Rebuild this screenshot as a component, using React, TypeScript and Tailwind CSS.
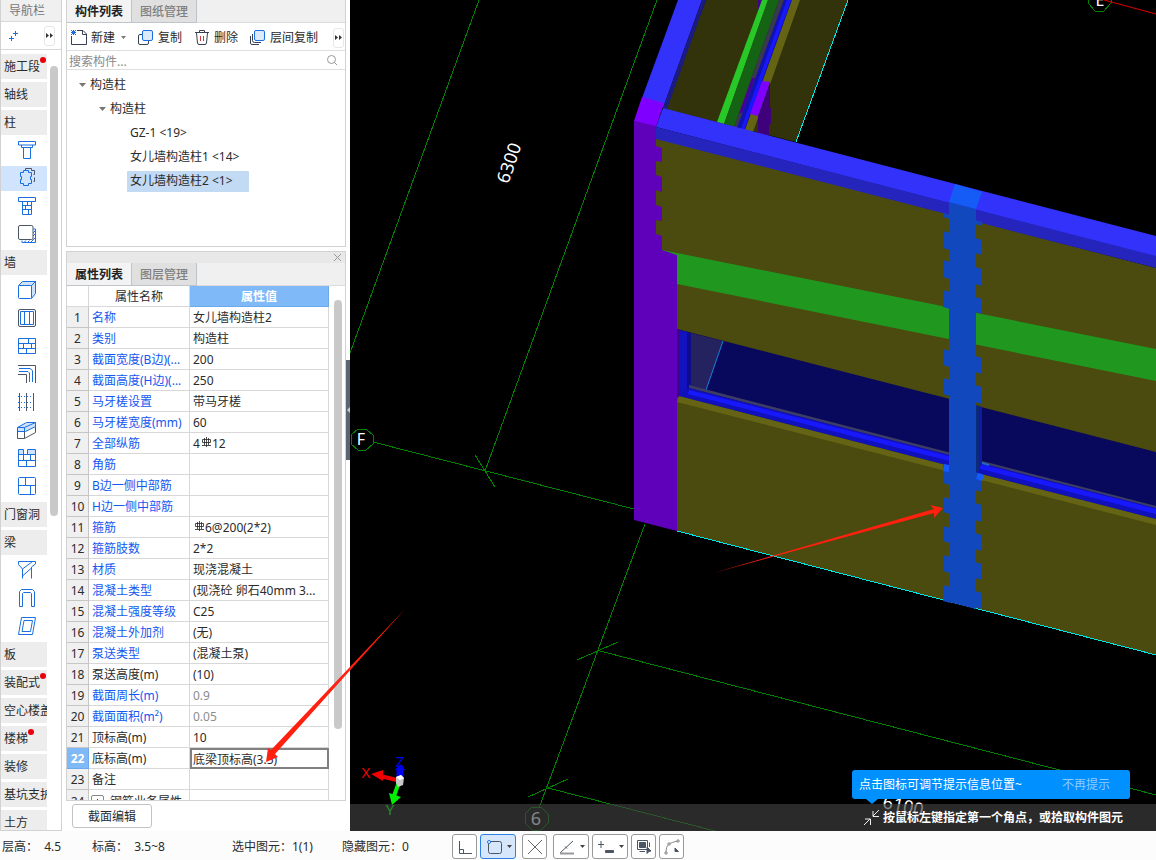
import React from "react";

/* ================= DATA ================= */

type NavItem = { label?: string; icon?: string; dot?: boolean; active?: boolean };

const navItems: NavItem[] = [
  { label: "施工段", dot: true },
  { label: "轴线" },
  { label: "柱" },
  { icon: "column" },
  { icon: "structColumn", active: true },
  { icon: "brickColumn" },
  { icon: "insulation" },
  { label: "墙" },
  { icon: "wall" },
  { icon: "curtain" },
  { icon: "brick" },
  { icon: "layers" },
  { icon: "dotted" },
  { icon: "parapet" },
  { icon: "brickNotch" },
  { icon: "brickPlain" },
  { label: "门窗洞" },
  { label: "梁" },
  { icon: "beam" },
  { icon: "lintel" },
  { icon: "ring" },
  { label: "板" },
  { label: "装配式", dot: true },
  { label: "空心楼盖" },
  { label: "楼梯", dot: true },
  { label: "装修" },
  { label: "基坑支护" },
  { label: "土方" },
];

type Prop = { name: string; value: string; plain?: boolean; muted?: boolean };

const props: Prop[] = [
  { name: "名称", value: "女儿墙构造柱2" },
  { name: "类别", value: "构造柱" },
  { name: "截面宽度(B边)(...", value: "200" },
  { name: "截面高度(H边)(...", value: "250" },
  { name: "马牙槎设置", value: "带马牙槎" },
  { name: "马牙槎宽度(mm)", value: "60" },
  { name: "全部纵筋", value: "4#12" },
  { name: "角筋", value: "" },
  { name: "B边一侧中部筋", value: "" },
  { name: "H边一侧中部筋", value: "" },
  { name: "箍筋", value: "#6@200(2*2)" },
  { name: "箍筋肢数", value: "2*2" },
  { name: "材质", value: "现浇混凝土" },
  { name: "混凝土类型", value: "(现浇砼 卵石40mm 3..." },
  { name: "混凝土强度等级", value: "C25" },
  { name: "混凝土外加剂", value: "(无)" },
  { name: "泵送类型", value: "(混凝土泵)" },
  { name: "泵送高度(m)", value: "(10)", plain: true },
  { name: "截面周长(m)", value: "0.9", muted: true },
  { name: "截面面积(m²)", value: "0.05", muted: true },
  { name: "顶标高(m)", value: "10", plain: true },
  { name: "底标高(m)", value: "底梁顶标高(3.5)", plain: true },
  { name: "备注", value: "", plain: true },
];

/* ================= ICONS ================= */

const B = "#1a6fe0";
const D = "#4b5563";

const navIcons: Record<string, React.ReactNode> = {
  column: <path d="M.5 .5h17v3.500h-17zM3.500 4v2.500h11V4M5.500 6.500v11h7v-11" />,
  structColumn: (
    <>
      <path d="M7.500 1.500V-.5h6v2h3v4h-1M16.500 8.500v4h-1" stroke={D} />
      <path d="M5.500 1.500h5v2h3v4h-1v3h1v4h-3v2h-5v-2h-3v-4h1v-3h-1v-4h3z" />
    </>
  ),
  brickColumn: <path d="M.5 .5h17v4h-17zM4.500 4.500v13h9v-13M4.500 8.500h9M4.500 12.500h9M9.500 4.500v4M7.500 8.500v4M10.500 12.500v5" />,
  insulation: (
    <>
      <path d="M15.500 4h2v13.500H4v-2M15 8l2.500-2.500M15 11l2.500-2.500M13 17l4-4M10 17l1.500-1.500M6.500 17l1.500-1.500" />
      <rect x=".5" y=".5" width="14.500" height="14" rx="1.500" stroke={D} fill="#fff" />
    </>
  ),
  wall: (
    <>
      <path d="M.5 4.500l4-4h13l-4 4zM13.500 4.500l4-4v12l-4 5z" fill="#cfe2fb" />
      <rect x=".5" y="4.500" width="13" height="13" rx="1" fill="#fff" />
    </>
  ),
  curtain: (
    <>
      <rect x=".5" y=".5" width="17" height="17" rx="1.500" stroke={D} />
      <path d="M2.500 2.500h13v13h-13zM6.500 2.500v13M11.500 2.500v13" />
    </>
  ),
  brick: <path d="M.5 1.500h17v15h-17zM.5 6.500h17M.5 11.500h17M10.500 1.500v5M5.500 6.500v5M13.500 6.500v5M8.500 11.500v5" />,
  layers: (
    <>
      <path d="M0 .5h17.500V18M0 9.500h8.500V18" stroke={D} />
      <path d="M1 3.500h11l2.500 2V17M1 6.500h9l1.500 1.500V17" />
    </>
  ),
  dotted: (
    <>
      <path d="M1.500 0v18M8.500 0v18M15.500 0v18" stroke={D} />
      <path d="M0 3.500h18M0 9.500h18M0 14.500h18" strokeDasharray="1 2" />
    </>
  ),
  parapet: (
    <>
      <path d="M-.5 6.500l9-5h9v4l-10 5h-8z" fill="#cfe2fb" />
      <path d="M-.5 6.500h7v4M6.500 6.500l11-5" />
      <path d="M-.5 9v8.500h7v-7M6.500 17.500l11-6v-6" stroke={D} />
    </>
  ),
  brickNotch: (
    <>
      <path d="M.5 .5h5v5h-5zM9.500 .5h8v5h-8z" fill="#cfe2fb" />
      <path d="M.5 5.500v12h17v-12M.5 5.500h17M.5 11.500h17M5.500 5.500v6M12.500 5.500v6M8.500 11.500v6" />
    </>
  ),
  brickPlain: (
    <>
      <rect x=".5" y=".5" width="17" height="17" rx="1" />
      <path d="M.5 8.500h17M7.500 .5v8M12.500 8.500v9" />
    </>
  ),
  beam: <path d="M.5 .5h17v2.500l-4 3v11.500M.5 .5v3l4 4.500v9.500M4.500 8l10-7.500M4.500 15l9-8" />,
  lintel: <path d="M1.500 17.500V2.500l2-2h11l2 2v15h-3V4.500l-1-1h-7l-1 1v13z" />,
  ring: <path d="M3.500 .5h14l-3 17H.5zM6 3.500h8.500l-2 11H4z" />,
};

const Svg = ({ w, h, children, stroke = "#374151" }: { w: number; h: number; children: React.ReactNode; stroke?: string }) => (
  <svg width={w} height={h} viewBox={`0 0 ${w} ${h}`} fill="none" stroke={stroke} className="block shrink-0 overflow-visible" aria-hidden="true">
    {children}
  </svg>
);

const MoreButton = () => (
  <button aria-label="更多" className="flex h-5 w-[11px] shrink-0 items-center justify-center rounded-[3px] border border-gray-200 bg-white">
    <Svg w={7} h={5} stroke="none">
      <path d="M0 0l3 2.500L0 5zM4 0l3 2.500L4 5z" fill="#333" />
    </Svg>
  </button>
);

/* Rebar grade mark used in front of diameters */
const Rebar = () => (
  <svg width="10" height="10" viewBox="0 0 10 10" fill="none" stroke="#222" className="mx-px mb-1.5 inline-block" role="img" aria-label="HRB400">
    <path d="M5.500 0v10M1 8.500h9M1.500 5.500v-3h8v3zM3.500 1v7M7.500 1v7" strokeWidth=".8" />
  </svg>
);

/* ================= LEFT NAVIGATION ================= */

const NavBar = () => (
  <nav className="flex w-[62px] shrink-0 flex-col overflow-hidden border-x border-b border-[#d2d2d2] bg-white">
    <div className="flex h-[22px] shrink-0 items-center border-b border-[#d8d8d8] bg-[#f0f0f0] pl-2 text-[#777]">导航栏</div>
    <div className="flex h-7 shrink-0 items-center justify-between border-b border-[#d8d8d8] pr-1.5 pl-2">
      <Svg w={9} h={10} stroke={B}>
        <path d="M6.500 0v5M4 2.500h5M2.500 5v5M0 7.500h5" />
      </Svg>
      <MoreButton />
    </div>
    <div className="flex min-h-0 flex-1 gap-[3px] pt-1">
      <ul className="flex w-[46px] flex-col gap-[3px] overflow-hidden">
        {navItems.map((item, i) => (
          <li key={i} className="h-[25px] shrink-0">
            {item.label ? (
              <button className="flex h-full w-full items-center overflow-hidden bg-[#ededed] pl-[3px] whitespace-nowrap">
                <span className="relative">
                  {item.label}
                  {item.dot && <i className="absolute -top-0.5 left-full size-1.5 rounded-full bg-red-600" />}
                </span>
              </button>
            ) : (
              <button
                aria-label={item.icon}
                className={`flex h-full w-full items-center pl-[17px] ${item.active ? "bg-[#d0e5fd]" : ""}`}
              >
                <Svg w={19} h={19} stroke={B}>
                  {navIcons[item.icon as string]}
                </Svg>
              </button>
            )}
          </li>
        ))}
      </ul>
      <div className="mt-3 h-[450px] w-2 shrink-0 rounded-full bg-[#c9c9c9]" />
    </div>
  </nav>
);

/* ================= COMPONENT LIST ================= */

const Tabs = ({ items }: { items: string[] }) => (
  <div role="tablist" className="flex h-[23px] shrink-0 border-b border-[#dcdcdc] bg-[#f0f0f0]">
    {items.map((t, i) => (
      <button
        key={t}
        role="tab"
        aria-selected={i === 0}
        className={`h-[23px] border-r border-b border-[#bfc3ca] px-2 pt-0.5 ${i === 0 ? "bg-[#f3f3f3] font-bold text-[#222]" : "bg-[#e0e0e0] font-medium text-[#808080]"}`}
      >
        {t}
      </button>
    ))}
  </div>
);

const CopyIcon = ({ triple = false }: { triple?: boolean }) => (
  <Svg w={16} h={15}>
    {triple && <path d="M.5 6v7a1.500 1.500 0 0 0 1.500 1.500h7" />}
    <path d={triple ? "M2.500 4v6.500a2 2 0 0 0 2 2H11" : "M4 4.500H2a1.500 1.500 0 0 0-1.500 1.500v7A1.500 1.500 0 0 0 2 14.500h7a1.500 1.500 0 0 0 1.500-1.500v-2"} />
    <rect x="4.500" y=".5" width="10" height="10" rx="1.500" fill="#dceafc" stroke={B} />
  </Svg>
);

const Caret = () => (
  <Svg w={7} h={4} stroke="none">
    <path d="M0 0h7L3.500 4z" fill="#777" />
  </Svg>
);

const ComponentList = () => (
  <section className="flex h-[247px] shrink-0 flex-col border-x border-b border-[#d2d2d2] bg-white">
    <Tabs items={["构件列表", "图纸管理"]} />
    <div className="flex h-[28px] shrink-0 items-center border-b border-[#dedede] pt-0.5 pr-px pl-1">
      <button className="flex items-center gap-1">
        <Svg w={16} h={15}>
          <path d="M6 .5h6l3.500 3.500v10.500H.5V6M11.500 .5v4h4" />
          <path d="M0 0l5 5M5 0L0 5M2.500 0v5M0 2.500h5" stroke={B} />
        </Svg>
        新建
      </button>
      <button aria-label="新建选项" className="ml-1.5">
        <Svg w={5} h={3} stroke="none">
          <path d="M0 0h5L2.500 3z" fill="#777" />
        </Svg>
      </button>
      <button className="ml-3 flex items-center gap-1">
        <CopyIcon />
        复制
      </button>
      <button className="ml-3 flex items-center gap-1">
        <Svg w={16} h={15}>
          <path d="M1 2.500h14M5.500 2.500v-2h5v2M2.500 3l1 10q.2 1.500 1.500 1.500h6q1.300 0 1.500-1.500l1-10" />
          <path d="M6.500 6v5M9.500 6v5" stroke="#e23333" />
        </Svg>
        删除
      </button>
      <button className="ml-3 flex items-center gap-1">
        <CopyIcon triple />
        层间复制
      </button>
      <div className="ml-auto">
        <MoreButton />
      </div>
    </div>
    <label className="flex h-[19px] shrink-0 items-center border-b border-[#dedede] pr-2 pl-0.5">
      <input
        type="text"
        aria-label="搜索构件"
        placeholder="搜索构件..."
        className="h-full min-w-0 flex-1 pt-0.5 outline-none placeholder:text-[#8a8a8a]"
      />
      <Svg w={10} h={10} stroke="#999">
        <circle cx="4.500" cy="4.500" r="4" />
        <path d="M7.500 7.500L10 10" />
      </Svg>
    </label>
    <ul className="pt-[3px] leading-6">
      <li className="flex items-center gap-1 pl-3">
        <Caret />
        构造柱
      </li>
      <li className="flex items-center gap-1 pl-8">
        <Caret />
        构造柱
      </li>
      <li className="pl-[63px]">GZ-1 &lt;19&gt;</li>
      <li className="pl-[63px]">女儿墙构造柱1 &lt;14&gt;</li>
      <li className="flex h-6 items-center pl-[60px]">
        <span className="h-[21px] w-[122px] rounded-[1px] bg-[#c2daf4] pl-[3px] leading-5">女儿墙构造柱2 &lt;1&gt;</span>
      </li>
    </ul>
  </section>
);

/* ================= PROPERTY TABLE ================= */

const PropertyPanel = () => (
  <section className="flex min-h-0 flex-1 flex-col border border-[#d2d2d2] bg-white">
    <div className="flex h-[11px] shrink-0 items-center justify-end bg-[#e8e8e8] pr-1">
      <button aria-label="关闭">
        <Svg w={7} h={7} stroke="#999">
          <path d="M0 0l7 7M7 0L0 7" />
        </Svg>
      </button>
    </div>
    <Tabs items={["属性列表", "图层管理"]} />
    <div className="flex min-h-0 flex-1 overflow-hidden">
      <div className="min-w-0 flex-1">
        <table className="w-full table-fixed border-separate border-spacing-0">
          <colgroup>
            <col className="w-[22px]" />
            <col className="w-[101px]" />
            <col />
          </colgroup>
          <thead>
            <tr className="h-[21px] leading-[18px]">
              <th className="border-r border-b border-[#d8d8d8] p-0" />
              <th className="border-r border-b border-[#d8d8d8] p-0 pt-0.5 font-normal">属性名称</th>
              <th className="border-r border-b border-[#6aa9ec] bg-[#80b9f8] p-0 pt-0.5 font-bold text-white">属性值</th>
            </tr>
          </thead>
          <tbody>
            {props.map((p, i) => {
              const selected = i === 21;
              return (
                <tr key={p.name} className="h-[21px] leading-[18px] whitespace-nowrap">
                  <td className={`border-r border-b p-0 pt-0.5 text-center ${selected ? "border-[#6aa9ec] bg-[#80b9f8] font-bold text-white" : "border-[#c6c6c6] bg-[#f0f0f0]"}`}>
                    {i + 1}
                  </td>
                  <td className={`border-r border-b border-[#d8d8d8] p-0 pt-0.5 pl-[3px] ${p.plain ? "" : "text-[#1458f0]"}`}>{p.name}</td>
                  {selected ? (
                    <td className="p-0">
                      <input
                        type="text"
                        aria-label={p.name}
                        defaultValue={p.value}
                        className="block h-[21px] w-full border-2 border-[#808080] pl-px outline-none"
                      />
                    </td>
                  ) : (
                    <td className={`border-r border-b border-[#d8d8d8] p-0 pt-0.5 pl-[3px] ${p.muted ? "text-[#8c8c8c]" : ""}`}>
                      {p.value.split("#").map((part, k) => (
                        <React.Fragment key={k}>
                          {k > 0 && <Rebar />}
                          {part}
                        </React.Fragment>
                      ))}
                    </td>
                  )}
                </tr>
              );
            })}
            <tr className="h-[21px] leading-[18px]">
              <td className="border-r border-[#c6c6c6] bg-[#f0f0f0] p-0 pt-0.5 text-center">24</td>
              <td className="border-r border-[#d8d8d8] p-0 pt-0.5">
                <button className="flex items-center gap-1.5 pl-0.5 whitespace-nowrap">
                  <Svg w={13} h={13}>
                    <rect x=".5" y=".5" width="12" height="12" rx="1.500" stroke="#888" />
                    <path d="M6.500 4v5M4 6.500h5" />
                  </Svg>
                  钢筋业务属性
                </button>
              </td>
              <td className="border-r border-[#d8d8d8] p-0" />
            </tr>
          </tbody>
        </table>
      </div>
      <div className="flex w-4 shrink-0 justify-end pt-3.5 pr-[3px]">
        <div className="h-[429px] w-2 rounded-full bg-[#c9c9c9]" />
      </div>
    </div>
  </section>
);

/* ================= 3D VIEW ================= */

// [top, bottom] of every tooth along the two sides of the column
const leftTeeth = [[213, 217], [231, 248], [260, 277], [290, 307], [349, 365], [378, 394], [465, 483], [497, 512], [526, 541], [555, 571], [585, 601]];
const rightTeeth = [[222, 226], [240, 255], [269, 286], [299, 314], [358, 374], [387, 404], [474, 492], [505, 522], [535, 551], [564, 580], [593, 609]];

const Model = () => (
  <svg viewBox="350 0 806 831" preserveAspectRatio="xMinYMin slice" className="h-full w-full" fontFamily="'Noto Sans', sans-serif" role="img" aria-label="三维视图">
    {/* Axis grid */}
    <g stroke="#008200" fill="none" shapeRendering="crispEdges">
      <path d="M657 0L485 471M479 0L350 353M373 442L634 509M475 455L495 487M645 524L539 808M577 660L618 642M600 651L1156 795M528 797L568 779M548 788L715 831" />
      <path d="M358 429h8l7 6v9l-7 6h-8l-7-6v-9zM1088 -5v8l7 8h9l7-8v-8M532 807h9l7 7v9l-7 7h-9l-7-7v-9z" />
    </g>
    <path d="M1104 0L1156 14" stroke="#e00000" />
    <g fill="#fff" textAnchor="middle">
      <text x="361" y="445" fontSize="16">F</text>
      <text x="1100" y="6" fontSize="16">E</text>
      <text fontSize="18" transform="translate(515 165) rotate(-71)">6300</text>
      <text fontSize="18" transform="translate(902 812) rotate(12)">6100</text>
      <text x="536" y="825" fontSize="18">6</text>
    </g>

    {/* Back wall */}
    <path d="M706 0H848L796 142L664 109z" fill="#32320b" />
    <path d="M678 0H702L663 108L642 98z" fill="#3232fa" />
    <path d="M702 0H706L667 109L663 108z" fill="#1b1b82" />
    <path d="M758 0h5l-5 11z" fill="#45008a" />
    <path d="M762 0h6L724 124L717 122z" fill="#28c828" />
    <path d="M768 0h11L734 127L724 124z" fill="#146414" />
    <path d="M779 0h5L738 128L734 127z" fill="#38384e" />
    <path d="M752 78h3L743 112L739 114z" fill="#45009a" />
    <path d="M784 0h8L745 130L737 128z" fill="#1111b4" />
    <path d="M787 0h4L744 130L741 129z" fill="#1818ff" />
    <path d="M792 0h8L753 132L745 130z" fill="#646414" />
    <path d="M762 81l8 1L758 116L750 114z" fill="#8000ff" />
    <path d="M770 82v26h1v16l-2 1v11l-11-3V116z" fill="#3f007c" />
    <path d="M848 0L796 142" stroke="#00e6e6" shapeRendering="crispEdges" />

    {/* Front wall */}
    <path d="M656 138L1156 268V655L677 531L656 250z" fill="#4b4b0f" />
    <path d="M663 108L1156 236V257L656 127z" fill="#3232fa" />
    <path d="M656 127L1156 256V268L656 139z" fill="#2525be" />
    <path d="M657 249L677 253L1156 349V381L677 284z" fill="#209820" />
    <path d="M677 329L1156 452V520L677 397z" fill="#08085c" />
    <path d="M691 333L723 341L706 390L691 386z" fill="#24225f" />
    <path d="M723 341L706 390" stroke="#1482d8" />
    <path d="M677 329h2v68h-2z" fill="#40008a" />
    <path d="M679 330L688 332V397L679 396z" fill="#1212be" />
    <path d="M687 332L691 333V389L687 392z" fill="#0c0c8c" />
    <path d="M689 385L1156 506V509L689 388z" fill="#3c3c64" />
    <path d="M689 388L1156 508V519L679 396z" fill="#1111bb" />
    <path d="M689 390L1156 509V514L688 394z" fill="#1818ff" />
    <path d="M679 396L1156 519V525L677 402z" fill="#646414" />
    <path d="M677 531L1156 655" stroke="#00e6e6" shapeRendering="crispEdges" />

    {/* Corner column */}
    <path d="M642 97L664 103L656 127L634 121z" fill="#8000ff" />
    <path d="M634 121L656 126V146L662 148V162L656 161V175L662 177V192L656 190V205L662 207V221L656 220V234L662 236V250L677 255V531L634 520z" fill="#5f00bb" />

    {/* Selected parapet column */}
    <path d="M976 405L979 406V470L976 474z" fill="#0c2a7c" />
    <path d="M979 406L982 407V463L979 470z" fill="#101a9c" />
    <path d="M982 462l7 2v2l-7-2z" fill="#2468c8" />
    <g fill="#1148be">
      {leftTeeth.map(([a, b]) => (
        <path key={a} d={`M943 ${a}l7 2V${b + 2}l-7-2z`} />
      ))}
      {rightTeeth.map(([a, b]) => (
        <path key={a} d={`M975 ${a - 2}l7 2V${b}l-7-2z`} />
      ))}
      <path d="M949 202L976 209V609L949 602z" />
    </g>
    <path d="M944 464l5 1v7l-6-1zM978 473l6 2-2 6-6-2z" fill="#145cff" />
    <path d="M955 184L982 192L976 209L949 202z" fill="#145cf5" />

    {/* Pointer to the column */}
    <path d="M713 573L934 509L930 505L943 508L934 518L934 513z" fill="#ff2010" />

    {/* Orientation gizmo */}
    <g strokeWidth="4">
      <path d="M397 780L380 776" stroke="#f00000" />
      <path d="M400 779V768" stroke="#0000f0" strokeWidth="7" />
      <path d="M399 782L394 796" stroke="#00f000" />
    </g>
    <path d="M371 774L383 770V781z" fill="#f00000" />
    <path d="M395 770L400 764L405 770z" fill="#0000f0" />
    <path d="M389 793L401 797L392 805z" fill="#00f000" />
    <path d="M396 777l5-2 3 3-1 7-5 2-2-4z" fill="#c8c8c8" />
    <path d="M396 777l5-2 3 3-4 2z" fill="#fff" />
    <g fontSize="15" textAnchor="middle">
      <text x="366" y="778" fill="#f00000">X</text>
      <text x="400" y="767" fill="#0000f0">Z</text>
      <text x="390" y="815" fill="#00ff00">Y</text>
    </g>
  </svg>
);

const Viewport = () => (
  <main className="relative min-w-0 flex-1 overflow-hidden bg-black">
    <Model />
    <div className="absolute inset-x-0 bottom-0 flex h-[27px] items-center justify-end gap-[3px] bg-[#404040]/65 pr-[33px] font-bold text-white">
      <Svg w={16} h={16} stroke="#eee">
        <path d="M15 0L9 6M9 1v5.500h6M0 15l6-6M1 9h5.500v6" />
      </Svg>
      按鼠标左键指定第一个角点，或拾取构件图元
    </div>
    <div className="absolute right-[26px] bottom-8 flex h-[29px] w-[278px] items-center justify-between rounded-[3px] bg-[#0090ff] pr-5 pl-[7px] text-white">
      点击图标可调节提示信息位置~
      <button className="text-[#8cccff]">不再提示</button>
      <div className="absolute top-full left-3.5 border-x-[6px] border-t-[5px] border-x-transparent border-t-[#0090ff]" />
    </div>
  </main>
);

/* ================= STATUS BAR ================= */

const tools = [
  { name: "正交", art: <path d="M3.500 3v12.500H16M3.500 11.500h4v4" /> },
  {
    name: "矩形选择",
    wide: true,
    active: true,
    art: (
      <>
        <rect x="3.500" y="3.500" width="13" height="12" rx="2" />
        <circle cx="4" cy="4" r="1.500" stroke={B} fill="#fff" />
      </>
    ),
  },
  { name: "交点", group: true, art: <path d="M2 2l14 14M16 2L2 16" stroke="#666" /> },
  {
    name: "角度",
    wide: true,
    group: true,
    art: (
      <>
        <path d="M2 15L15 3M7 8.500l2 2" />
        <path d="M2 15.500h14" stroke="#999" strokeWidth="2" />
      </>
    ),
  },
  {
    name: "偏移",
    wide: true,
    art: (
      <>
        <path d="M1 6.500h6M4 3v7" />
        <path d="M8.500 12.500h8v2h-8z" fill={D} />
      </>
    ),
  },
  {
    name: "叠加选择",
    art: (
      <>
        <path d="M2.500 2.500h10v9h-10z" />
        <path d="M4.500 4.500h6v5h-6z" fill={D} />
        <path d="M14.500 4.500V9M4.500 13.500H10" />
        <path d="M12 9l4 4-2 .5-2 2z" fill={D} />
      </>
    ),
  },
  {
    name: "折线选择",
    art: (
      <>
        <path d="M3 15q0-7 3-9 3-2 9-3" stroke="#888" />
        <path d="M2 14h2v2H2zM5 5h2v2H5zM14 2h2v2h-2z" fill="#fff" stroke="#888" />
        <path d="M12 10l3.500 3.500h-3.500z" fill={D} />
      </>
    ),
  },
];

const StatusBar = () => (
  <footer className="flex h-[29px] shrink-0 items-center bg-[#fcfcfc] pt-0.5 whitespace-nowrap">
    <span className="w-[90px] pl-0.5">层高：&nbsp; 4.5</span>
    <span className="w-[140px] pl-0.5">标高：&nbsp; 3.5~8</span>
    <span className="w-[110px] pl-0.5">选中图元：1(1)</span>
    <span className="w-[110px] pl-0.5">隐藏图元：0</span>
    <div className="flex gap-[3px] pl-0.5">
      {tools.map((t) => (
        <button
          key={t.name}
          aria-label={t.name}
          className={`flex h-[25px] items-center justify-center gap-1 rounded-[3px] border ${t.wide ? "w-9" : "w-[25px]"} ${t.group ? "ml-[3px]" : ""} ${t.active ? "border-[#2f7fe8] bg-[#d6e6fb]" : "border-[#999] bg-white"}`}
        >
          <Svg w={18} h={18} stroke={D}>
            {t.art}
          </Svg>
          {t.wide && (
            <Svg w={5} h={3} stroke="none">
              <path d="M0 0h5L2.500 3z" fill="#444" />
            </Svg>
          )}
        </button>
      ))}
    </div>
  </footer>
);

const App = () => {
  return (
    <div className="relative flex h-screen flex-col overflow-hidden bg-white font-['Noto_Sans','Noto_Sans_CJK_SC',sans-serif] text-xs text-[#2b2b2b]">
      <div className="flex min-h-0 flex-1">
        <NavBar />
        <aside className="ml-1 flex w-[280px] shrink-0 flex-col">
          <ComponentList />
          <div className="h-1 shrink-0" />
          <PropertyPanel />
          <div className="flex h-[30px] shrink-0 items-center pl-1.5">
            <button className="h-6 w-20 rounded-[3px] border border-[#c4c4c4] bg-white pt-0.5">截面编辑</button>
          </div>
        </aside>
        {/* Splitter */}
        <div className="w-1 shrink-0 pt-[360px]">
          <button aria-label="折叠面板" className="flex h-[100px] w-full items-center justify-center bg-[#5b6675]">
            <Svg w={3} h={6} stroke="none">
              <path d="M3 0v6L0 3z" fill="#ccc" />
            </Svg>
          </button>
        </div>
        <Viewport />
      </div>
      <StatusBar />

      {/* Pointer to the bottom elevation value */}
      <svg width="150" height="160" viewBox="260 606 150 160" className="pointer-events-none absolute top-[606px] left-[260px]" aria-hidden="true">
        <path d="M406 608L275 754L278 757L266 762L268 748L271 750z" fill="#ff2010" />
      </svg>
    </div>
  );
};

export default App;
